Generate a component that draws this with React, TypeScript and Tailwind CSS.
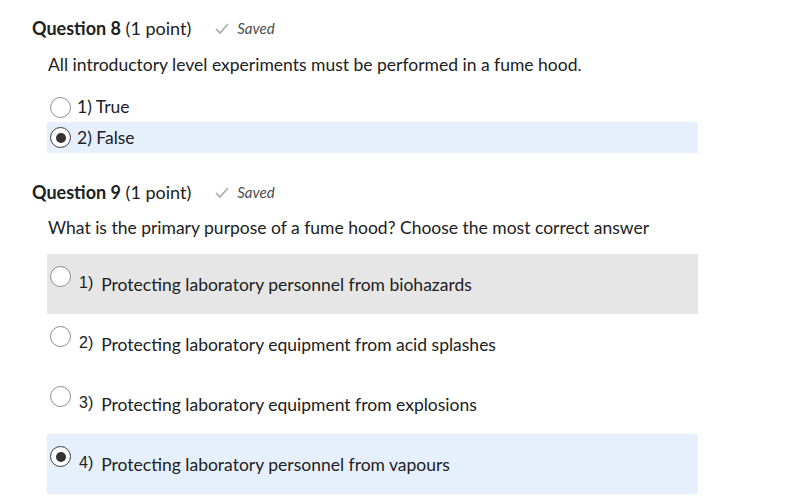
import React from "react";

const font = { fontFamily: "Lato, 'Noto Sans', sans-serif" } as const;

function Radio({ checked }: { checked?: boolean }) {
  return (
    <span
      className={
        "flex shrink-0 items-center justify-center w-[21px] h-[21px] rounded-full bg-white " +
        (checked ? "border-[1.5px] border-[#3a3a3a]" : "border border-[#8c8c8c]")
      }
    >
      {checked && <span className="block w-[10px] h-[10px] rounded-full bg-[#333]" />}
    </span>
  );
}

function Header({ n }: { n: number }) {
  return (
    <div className="flex items-center pl-8 h-[27px]">
      <span className="text-[18px] leading-[27px] text-[#202122]">
        <span className="font-bold">Question {n}</span> (1 point)
      </span>
      <svg className="ml-[24px] mr-[8px]" width="14" height="11" viewBox="0 0 14 11" fill="none">
        <polyline points="1,6 5,10 13,1" stroke="#a9a9a9" strokeWidth="1.6" fill="none" />
      </svg>
      <span className="italic text-[15px] text-[#494c4e]">Saved</span>
    </div>
  );
}

function ShortOpt({ label, checked }: { label: string; checked?: boolean }) {
  return (
    <div
      className={
        "flex items-center gap-[6px] pl-[3px] w-[651px] " +
        (checked ? "h-[31px] bg-[#e6f0fc]" : "h-[30px]")
      }
    >
      <Radio checked={checked} />
      <span className="text-[17.5px] leading-[26px] text-[#202122]">{label}</span>
    </div>
  );
}

function LongOpt({ num, text, bg, checked }: { num: string; text: string; bg?: string; checked?: boolean }) {
  return (
    <div className={"flex items-start pl-[3px] pt-3 w-[651px] h-[60px] " + (bg ?? "")}>
      <Radio checked={checked} />
      <span
        className="ml-2 mt-[8px] text-[16px] leading-[18px] text-[#202122]"
        style={{ fontFamily: "'Liberation Sans', Arial, sans-serif" }}
      >
        {num}
      </span>
      <span className="ml-[8px] mt-[6px] text-[17.5px] leading-[26px] text-[#202122]">{text}</span>
    </div>
  );
}

export default function App() {
  return (
    <div className="w-[793px] h-[499px] bg-white overflow-hidden pt-[15px]" style={font}>
      <Header n={8} />
      <div className="pl-[47px]">
        <p className="mt-[10px] pl-[1px] text-[17.5px] leading-[26px] text-[#202122]">
          All introductory level experiments must be performed in a fume hood.
        </p>
        <div className="mt-[14px]">
          <ShortOpt label="1) True" />
          <ShortOpt label="2) False" checked />
        </div>
      </div>
      <div className="mt-[26px]">
        <Header n={9} />
      </div>
      <div className="pl-[47px]">
        <p className="mt-[9px] pl-[1px] text-[17.5px] leading-[26px] text-[#202122]">
          What is the primary purpose of a fume hood? Choose the most correct answer
        </p>
        <div className="mt-[13px]">
          <LongOpt num="1)" text="Protecting laboratory personnel from biohazards" bg="bg-[#e6e6e6]" />
          <LongOpt num="2)" text="Protecting laboratory equipment from acid splashes" />
          <LongOpt num="3)" text="Protecting laboratory equipment from explosions" />
          <LongOpt num="4)" text="Protecting laboratory personnel from vapours" bg="bg-[#e6f0fc]" checked />
        </div>
      </div>
    </div>
  );
}
